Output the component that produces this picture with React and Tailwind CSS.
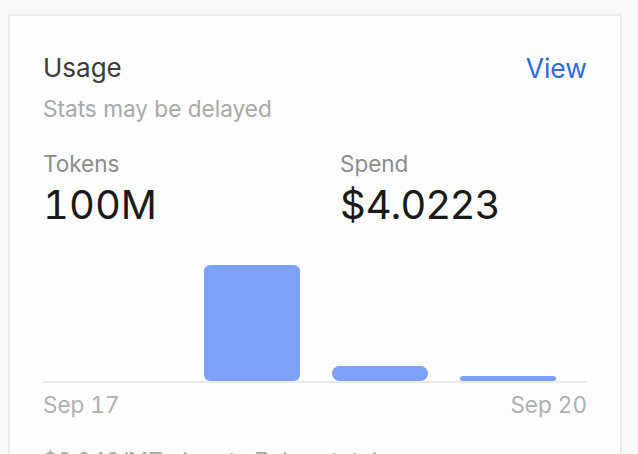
export default function App() {
  const bars = [0, 116, 15, 5];
  return (
    <div className="min-h-[454px] w-[638px] overflow-hidden bg-[#f8f8f8] pl-2 pt-[14px]" style={{ fontFamily: "Inter, 'Noto Sans', sans-serif" }}>
      <div className="h-[460px] w-[614px] border-2 border-b-0 border-[#ebebeb] bg-[#fdfdfd] px-[33px] pt-[35px]">
        <div className="flex items-start justify-between">
          <div className="text-[26px] leading-[34px] text-[#3b3b3b]">Usage</div>
          <a className="text-[26.5px] leading-[34px] text-[#2f6ae6]">View</a>
        </div>
        <div className="mt-[9px] text-[22.6px] leading-[30px] text-[#a9a9a9]">Stats may be delayed</div>
        <div className="mt-[25px] grid grid-cols-2">
          <div>
            <div className="text-[22.5px] leading-[30px] text-[#8c8c8c]">Tokens</div>
            <div className="mt-[1px] text-[40px] leading-[50px] text-[#1a1a1a] tabular-nums">100M</div>
          </div>
          <div className="pl-[25px]">
            <div className="text-[22.5px] leading-[30px] text-[#8c8c8c]">Spend</div>
            <div className="mt-[1px] text-[40px] leading-[50px] text-[#1a1a1a]">$4.0223</div>
          </div>
        </div>
        <div className="flex h-[153px] items-end gap-[32px] border-b-2 border-[#ebebeb] pl-[33px] pr-[31px]">
          {bars.map((h, i) => (
            <div
              key={i}
              className={`flex-1 bg-[#7ba2f7] ${i === 1 ? "rounded-[6px]" : "rounded-full"}`}
              style={{ height: h }}
            />
          ))}
        </div>
        <div className="mt-[7px] flex justify-between text-[22.5px] leading-[30px] text-[#b0b0b0] tabular-nums">
          <span>Sep 17</span>
          <span>Sep 20</span>
        </div>
        <div className="mt-[26px] text-[22.5px] leading-[30px] text-[#a9a9a9]">$0.040/MT · Input · 7 days total</div>
      </div>
    </div>
  );
}
